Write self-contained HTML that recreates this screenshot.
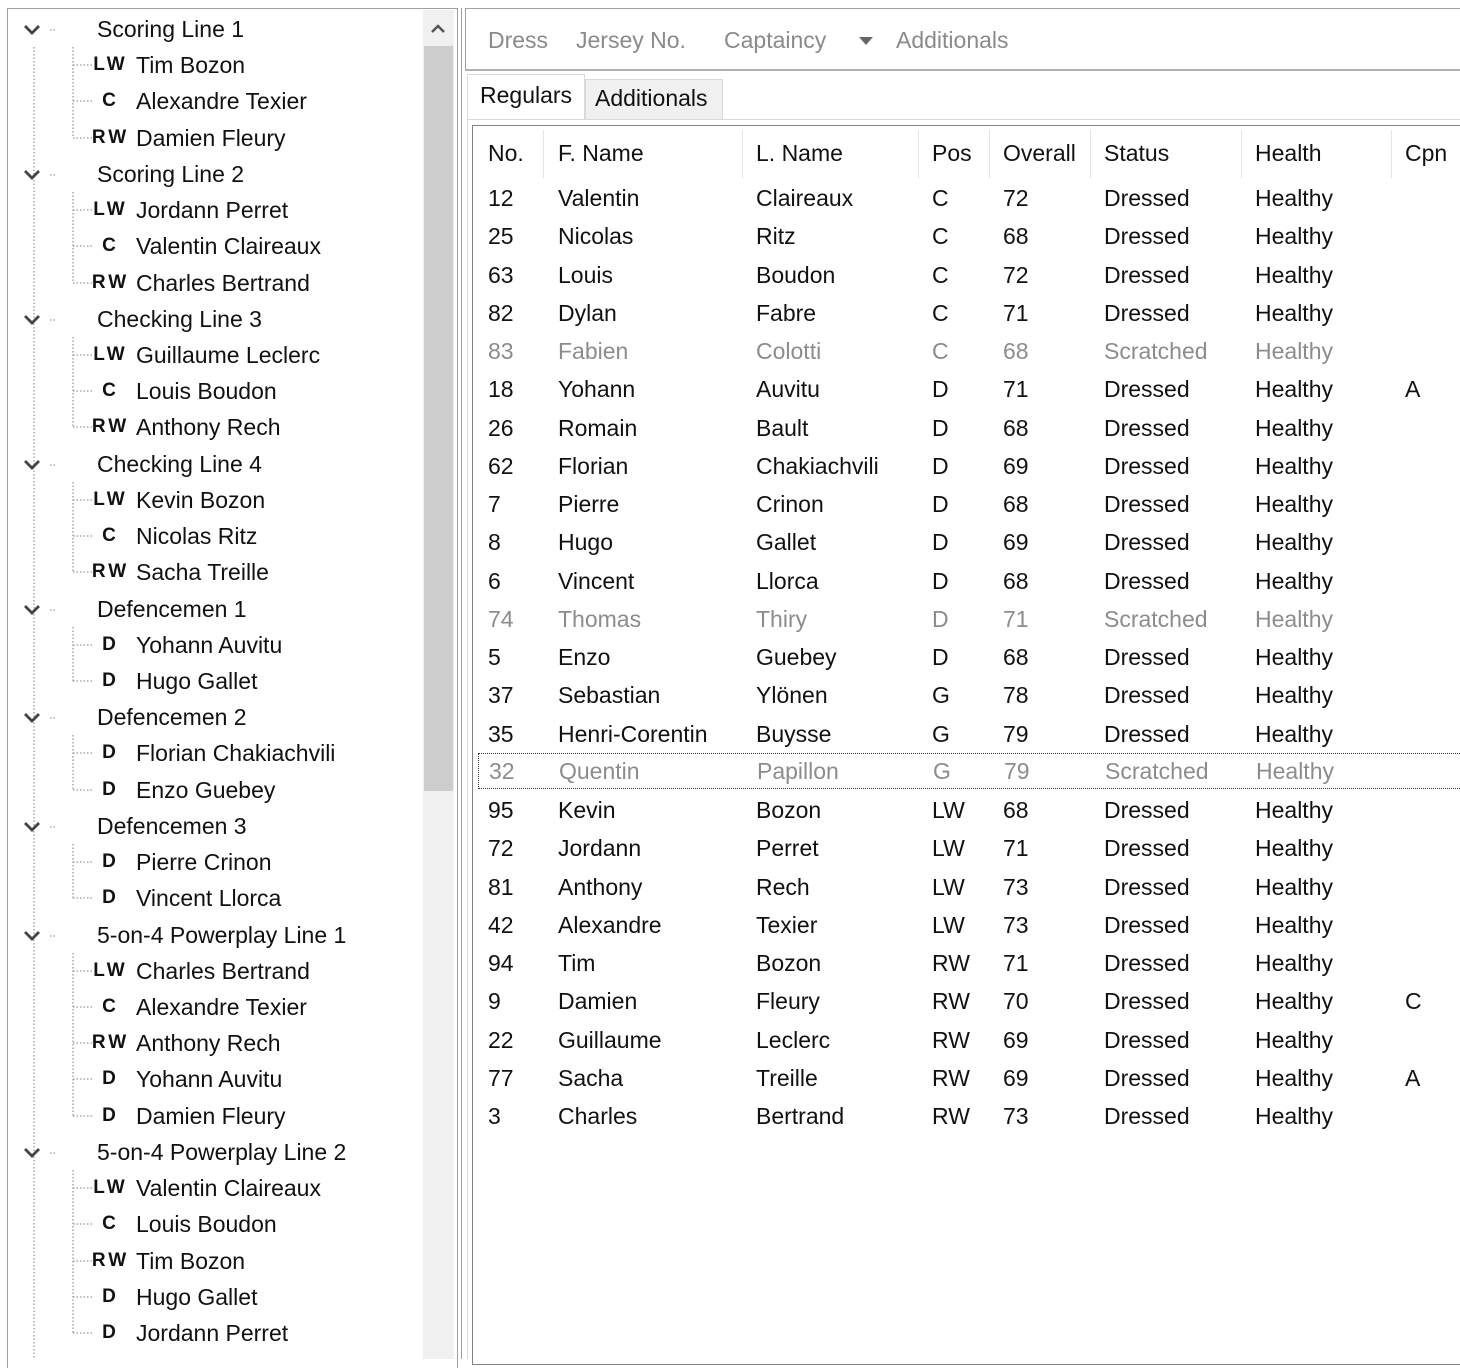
<!DOCTYPE html><html><head><meta charset="utf-8"><style>
*{margin:0;padding:0;box-sizing:border-box}
body{width:1460px;height:1359px;overflow:hidden;background:#fff;font-family:"Liberation Sans",sans-serif;color:#111;position:relative}
.a{position:absolute;white-space:nowrap}
.t{position:absolute;font-size:23px;line-height:36px;height:36px;white-space:nowrap}
.g{left:97px}
.n{left:136px}
.p{position:absolute;left:86px;width:46px;text-align:center;font-weight:900;font-size:19px;line-height:38px;letter-spacing:3px;text-indent:3px}
.r{position:absolute;left:472px;width:988px;height:38px;font-size:23px;line-height:38px}
.r span{position:absolute;white-space:nowrap}
.c1{left:16px}.c2{left:86px}.c3{left:284px}.c4{left:460px}.c5{left:531px}.c6{left:632px}.c7{left:783px}.c8{left:933px}
.s{color:#8c8c8c}
.sep{position:absolute;top:130px;width:1px;height:48px;background:#e3e3e3}
</style></head><body>
<div class="a" style="left:7px;top:8px;width:451px;height:1360px;border:1px solid #a0a0a0;border-bottom:none"></div>
<div class="a" style="left:423px;top:10px;width:31px;height:1349px;background:#f0f0f0"></div>
<div class="a" style="left:424px;top:46px;width:29px;height:745px;background:#cdcdcd"></div>
<svg class="a" style="left:428px;top:20px" width="20" height="16"><path d="M4 12 L10 6 L16 12" stroke="#555" stroke-width="2.5" fill="none"/></svg>
<div class="a" style="left:461px;top:8px;width:1px;height:1351px;background:#a0a0a0"></div>
<svg class="a" style="left:0;top:0" width="130" height="1359">
<g stroke="#999" stroke-width="1.3" stroke-dasharray="1.5 2" fill="none">
<path d="M34 47V1359"/>
<path d="M73 47V138M73 192V283M73 337V427M73 482V572M73 627V681M73 735V790M73 844V898M73 953V1116M73 1170V1333"/>
<path d="M73 65H92M73 101H92M73 138H92M73 210H92M73 246H92M73 283H92M73 355H92M73 391H92M73 427H92M73 500H92M73 536H92M73 572H92M73 645H92M73 681H92M73 753H92M73 790H92M73 862H92M73 898H92M73 971H92M73 1007H92M73 1043H92M73 1079H92M73 1116H92M73 1188H92M73 1224H92M73 1261H92M73 1297H92M73 1333H92"/>
<path d="M50 30H56M50 175H56M50 320H56M50 465H56M50 610H56M50 718H56M50 827H56M50 936H56M50 1153H56"/>
</g>
<g stroke="#444" stroke-width="2.8" fill="none">
<path d="M25 26l7 7 7-7M25 171l7 7 7-7M25 316l7 7 7-7M25 461l7 7 7-7M25 606l7 7 7-7M25 714l7 7 7-7M25 823l7 7 7-7M25 932l7 7 7-7M25 1149l7 7 7-7"/>
</g></svg>
<div class="t g" style="top:11px">Scoring Line 1</div>
<div class="p" style="top:46px">LW</div><div class="t n" style="top:47px">Tim Bozon</div>
<div class="p" style="top:82px">C</div><div class="t n" style="top:83px">Alexandre Texier</div>
<div class="p" style="top:119px">RW</div><div class="t n" style="top:120px">Damien Fleury</div>
<div class="t g" style="top:156px">Scoring Line 2</div>
<div class="p" style="top:191px">LW</div><div class="t n" style="top:192px">Jordann Perret</div>
<div class="p" style="top:227px">C</div><div class="t n" style="top:228px">Valentin Claireaux</div>
<div class="p" style="top:264px">RW</div><div class="t n" style="top:265px">Charles Bertrand</div>
<div class="t g" style="top:301px">Checking Line 3</div>
<div class="p" style="top:336px">LW</div><div class="t n" style="top:337px">Guillaume Leclerc</div>
<div class="p" style="top:372px">C</div><div class="t n" style="top:373px">Louis Boudon</div>
<div class="p" style="top:408px">RW</div><div class="t n" style="top:409px">Anthony Rech</div>
<div class="t g" style="top:446px">Checking Line 4</div>
<div class="p" style="top:481px">LW</div><div class="t n" style="top:482px">Kevin Bozon</div>
<div class="p" style="top:517px">C</div><div class="t n" style="top:518px">Nicolas Ritz</div>
<div class="p" style="top:553px">RW</div><div class="t n" style="top:554px">Sacha Treille</div>
<div class="t g" style="top:591px">Defencemen 1</div>
<div class="p" style="top:626px">D</div><div class="t n" style="top:627px">Yohann Auvitu</div>
<div class="p" style="top:662px">D</div><div class="t n" style="top:663px">Hugo Gallet</div>
<div class="t g" style="top:699px">Defencemen 2</div>
<div class="p" style="top:734px">D</div><div class="t n" style="top:735px">Florian Chakiachvili</div>
<div class="p" style="top:771px">D</div><div class="t n" style="top:772px">Enzo Guebey</div>
<div class="t g" style="top:808px">Defencemen 3</div>
<div class="p" style="top:843px">D</div><div class="t n" style="top:844px">Pierre Crinon</div>
<div class="p" style="top:879px">D</div><div class="t n" style="top:880px">Vincent Llorca</div>
<div class="t g" style="top:917px">5-on-4 Powerplay Line 1</div>
<div class="p" style="top:952px">LW</div><div class="t n" style="top:953px">Charles Bertrand</div>
<div class="p" style="top:988px">C</div><div class="t n" style="top:989px">Alexandre Texier</div>
<div class="p" style="top:1024px">RW</div><div class="t n" style="top:1025px">Anthony Rech</div>
<div class="p" style="top:1060px">D</div><div class="t n" style="top:1061px">Yohann Auvitu</div>
<div class="p" style="top:1097px">D</div><div class="t n" style="top:1098px">Damien Fleury</div>
<div class="t g" style="top:1134px">5-on-4 Powerplay Line 2</div>
<div class="p" style="top:1169px">LW</div><div class="t n" style="top:1170px">Valentin Claireaux</div>
<div class="p" style="top:1205px">C</div><div class="t n" style="top:1206px">Louis Boudon</div>
<div class="p" style="top:1242px">RW</div><div class="t n" style="top:1243px">Tim Bozon</div>
<div class="p" style="top:1278px">D</div><div class="t n" style="top:1279px">Hugo Gallet</div>
<div class="p" style="top:1314px">D</div><div class="t n" style="top:1315px">Jordann Perret</div>
<div class="a" style="left:465px;top:8px;width:1000px;height:63px;border:1px solid #a0a0a0;border-bottom:2px solid #b0b0b0"></div>
<div class="a" style="left:488px;top:27px;font-size:23px;color:#8a8a8a">Dress</div>
<div class="a" style="left:576px;top:27px;font-size:23px;color:#8a8a8a">Jersey No.</div>
<div class="a" style="left:724px;top:27px;font-size:23px;color:#8a8a8a">Captaincy</div>
<svg class="a" style="left:858px;top:36px" width="16" height="10"><path d="M1 1H15L8 9Z" fill="#666"/></svg>
<div class="a" style="left:896px;top:27px;font-size:23px;color:#8a8a8a">Additionals</div>
<div class="a" style="left:585px;top:79px;width:138px;height:40px;background:#f0f0f0;border:1px solid #d9d9d9;border-bottom:none"></div>
<div class="a" style="left:467px;top:74px;width:118px;height:46px;background:#fff;border:1px solid #d9d9d9;border-bottom:none"></div>
<div class="a" style="left:480px;top:82px;font-size:23px">Regulars</div>
<div class="a" style="left:595px;top:85px;font-size:23px">Additionals</div>
<div class="a" style="left:467px;top:119px;width:993px;height:1240px;border-left:1px solid #d9d9d9;border-top:1px solid #d9d9d9"></div>
<div class="a" style="left:472px;top:125px;width:990px;height:1240px;border:1px solid #828282"></div>
<div class="sep" style="left:543px"></div><div class="sep" style="left:742px"></div><div class="sep" style="left:918px"></div><div class="sep" style="left:989px"></div><div class="sep" style="left:1090px"></div><div class="sep" style="left:1241px"></div><div class="sep" style="left:1391px"></div>
<div class="r" style="top:134px"><span class="c1">No.</span><span class="c2">F. Name</span><span class="c3">L. Name</span><span class="c4">Pos</span><span class="c5">Overall</span><span class="c6">Status</span><span class="c7">Health</span><span class="c8">Cpn</span></div>
<div class="r" style="top:179px"><span class="c1">12</span><span class="c2">Valentin</span><span class="c3">Claireaux</span><span class="c4">C</span><span class="c5">72</span><span class="c6">Dressed</span><span class="c7">Healthy</span></div>
<div class="r" style="top:217px"><span class="c1">25</span><span class="c2">Nicolas</span><span class="c3">Ritz</span><span class="c4">C</span><span class="c5">68</span><span class="c6">Dressed</span><span class="c7">Healthy</span></div>
<div class="r" style="top:256px"><span class="c1">63</span><span class="c2">Louis</span><span class="c3">Boudon</span><span class="c4">C</span><span class="c5">72</span><span class="c6">Dressed</span><span class="c7">Healthy</span></div>
<div class="r" style="top:294px"><span class="c1">82</span><span class="c2">Dylan</span><span class="c3">Fabre</span><span class="c4">C</span><span class="c5">71</span><span class="c6">Dressed</span><span class="c7">Healthy</span></div>
<div class="r s" style="top:332px"><span class="c1">83</span><span class="c2">Fabien</span><span class="c3">Colotti</span><span class="c4">C</span><span class="c5">68</span><span class="c6">Scratched</span><span class="c7">Healthy</span></div>
<div class="r" style="top:370px"><span class="c1">18</span><span class="c2">Yohann</span><span class="c3">Auvitu</span><span class="c4">D</span><span class="c5">71</span><span class="c6">Dressed</span><span class="c7">Healthy</span><span class="c8">A</span></div>
<div class="r" style="top:409px"><span class="c1">26</span><span class="c2">Romain</span><span class="c3">Bault</span><span class="c4">D</span><span class="c5">68</span><span class="c6">Dressed</span><span class="c7">Healthy</span></div>
<div class="r" style="top:447px"><span class="c1">62</span><span class="c2">Florian</span><span class="c3">Chakiachvili</span><span class="c4">D</span><span class="c5">69</span><span class="c6">Dressed</span><span class="c7">Healthy</span></div>
<div class="r" style="top:485px"><span class="c1">7</span><span class="c2">Pierre</span><span class="c3">Crinon</span><span class="c4">D</span><span class="c5">68</span><span class="c6">Dressed</span><span class="c7">Healthy</span></div>
<div class="r" style="top:523px"><span class="c1">8</span><span class="c2">Hugo</span><span class="c3">Gallet</span><span class="c4">D</span><span class="c5">69</span><span class="c6">Dressed</span><span class="c7">Healthy</span></div>
<div class="r" style="top:562px"><span class="c1">6</span><span class="c2">Vincent</span><span class="c3">Llorca</span><span class="c4">D</span><span class="c5">68</span><span class="c6">Dressed</span><span class="c7">Healthy</span></div>
<div class="r s" style="top:600px"><span class="c1">74</span><span class="c2">Thomas</span><span class="c3">Thiry</span><span class="c4">D</span><span class="c5">71</span><span class="c6">Scratched</span><span class="c7">Healthy</span></div>
<div class="r" style="top:638px"><span class="c1">5</span><span class="c2">Enzo</span><span class="c3">Guebey</span><span class="c4">D</span><span class="c5">68</span><span class="c6">Dressed</span><span class="c7">Healthy</span></div>
<div class="r" style="top:676px"><span class="c1">37</span><span class="c2">Sebastian</span><span class="c3">Ylönen</span><span class="c4">G</span><span class="c5">78</span><span class="c6">Dressed</span><span class="c7">Healthy</span></div>
<div class="r" style="top:715px"><span class="c1">35</span><span class="c2">Henri-Corentin</span><span class="c3">Buysse</span><span class="c4">G</span><span class="c5">79</span><span class="c6">Dressed</span><span class="c7">Healthy</span></div>
<div class="r s" style="top:753px;left:478px;width:982px;border:1px dotted #333;border-right:none;height:36px;line-height:34px"><span style="left:10px">32</span><span style="left:80px">Quentin</span><span style="left:278px">Papillon</span><span style="left:454px">G</span><span style="left:525px">79</span><span style="left:626px">Scratched</span><span style="left:777px">Healthy</span></div>
<div class="r" style="top:791px"><span class="c1">95</span><span class="c2">Kevin</span><span class="c3">Bozon</span><span class="c4">LW</span><span class="c5">68</span><span class="c6">Dressed</span><span class="c7">Healthy</span></div>
<div class="r" style="top:829px"><span class="c1">72</span><span class="c2">Jordann</span><span class="c3">Perret</span><span class="c4">LW</span><span class="c5">71</span><span class="c6">Dressed</span><span class="c7">Healthy</span></div>
<div class="r" style="top:868px"><span class="c1">81</span><span class="c2">Anthony</span><span class="c3">Rech</span><span class="c4">LW</span><span class="c5">73</span><span class="c6">Dressed</span><span class="c7">Healthy</span></div>
<div class="r" style="top:906px"><span class="c1">42</span><span class="c2">Alexandre</span><span class="c3">Texier</span><span class="c4">LW</span><span class="c5">73</span><span class="c6">Dressed</span><span class="c7">Healthy</span></div>
<div class="r" style="top:944px"><span class="c1">94</span><span class="c2">Tim</span><span class="c3">Bozon</span><span class="c4">RW</span><span class="c5">71</span><span class="c6">Dressed</span><span class="c7">Healthy</span></div>
<div class="r" style="top:982px"><span class="c1">9</span><span class="c2">Damien</span><span class="c3">Fleury</span><span class="c4">RW</span><span class="c5">70</span><span class="c6">Dressed</span><span class="c7">Healthy</span><span class="c8">C</span></div>
<div class="r" style="top:1021px"><span class="c1">22</span><span class="c2">Guillaume</span><span class="c3">Leclerc</span><span class="c4">RW</span><span class="c5">69</span><span class="c6">Dressed</span><span class="c7">Healthy</span></div>
<div class="r" style="top:1059px"><span class="c1">77</span><span class="c2">Sacha</span><span class="c3">Treille</span><span class="c4">RW</span><span class="c5">69</span><span class="c6">Dressed</span><span class="c7">Healthy</span><span class="c8">A</span></div>
<div class="r" style="top:1097px"><span class="c1">3</span><span class="c2">Charles</span><span class="c3">Bertrand</span><span class="c4">RW</span><span class="c5">73</span><span class="c6">Dressed</span><span class="c7">Healthy</span></div>
</body></html>
